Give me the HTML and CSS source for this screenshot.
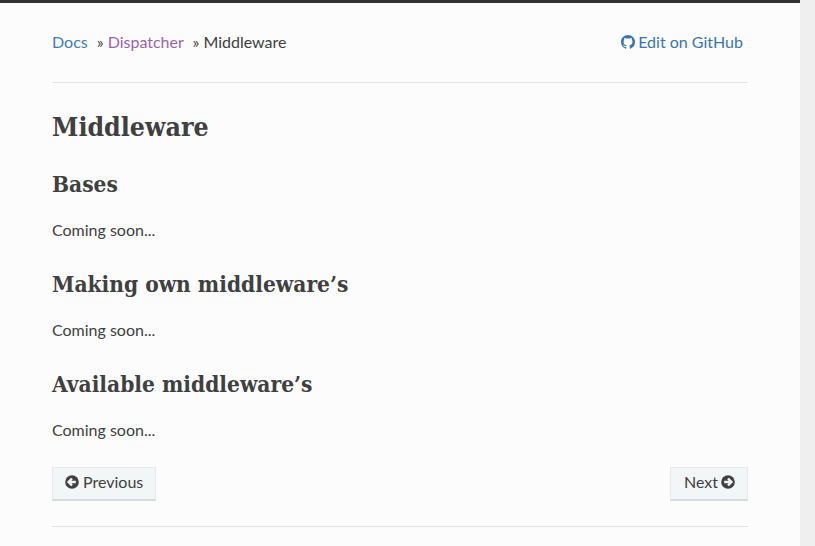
FILE: index.html
```html
<!DOCTYPE html>
<html lang="en">
<head>
    <meta charset="UTF-8">
    <title>Middleware</title>
    <link rel="stylesheet" href="styles.css">
</head>
<body>

<div class="page">
    <div class="content">
        <div class="breadcrumbs">
            <ul>
                <li><a href="#">Docs</a> <span class="sep">»</span></li>
                <li><a href="#" class="visited">Dispatcher</a> <span class="sep">»</span></li>
                <li>Middleware</li>
            </ul>
            <a href="#" class="edit">
                <svg class="icon" viewBox="0 0 16 16"><path fill="currentColor" d="M8 0C3.58 0 0 3.58 0 8c0 3.54 2.29 6.53 5.47 7.59.4.07.55-.17.55-.38 0-.19-.01-.82-.01-1.49-2.01.37-2.53-.49-2.69-.94-.09-.23-.48-.94-.82-1.13-.28-.15-.68-.52-.01-.53.63-.01 1.08.58 1.23.82.72 1.21 1.87.87 2.33.66.07-.52.28-.87.51-1.07-1.78-.2-3.64-.89-3.64-3.95 0-.87.31-1.59.82-2.15-.08-.2-.36-1.02.08-2.12 0 0 .67-.21 2.2.82.64-.18 1.32-.27 2-.27.68 0 1.36.09 2 .27 1.53-1.04 2.2-.82 2.2-.82.44 1.1.16 1.92.08 2.12.51.56.82 1.27.82 2.15 0 3.07-1.87 3.75-3.65 3.95.29.25.54.73.54 1.48 0 1.07-.01 1.93-.01 2.2 0 .21.15.46.55.38A8.013 8.013 0 0016 8c0-4.42-3.58-8-8-8z"/></svg>
                Edit on GitHub
            </a>
        </div>
        <hr>

        <h1>Middleware</h1>
        <h2>Bases</h2>
        <p>Coming soon...</p>
        <h2>Making own middleware’s</h2>
        <p>Coming soon...</p>
        <h2>Available middleware’s</h2>
        <p>Coming soon...</p>

        <div class="pager">
            <a href="#" class="btn">
                <svg class="icon" viewBox="0 0 16 16"><circle cx="8" cy="8" r="7.8" fill="currentColor"/><path d="M12.4 8H5M8 4 4 8l4 4" fill="none" stroke="#f3f6f6" stroke-width="2.8"/></svg>
                Previous
            </a>
            <a href="#" class="btn btn-next">
                Next
                <svg class="icon" viewBox="0 0 16 16"><circle cx="8" cy="8" r="7.8" fill="currentColor"/><path d="M3.6 8H11M8 4l4 4-4 4" fill="none" stroke="#f3f6f6" stroke-width="2.8"/></svg>
            </a>
        </div>
        <hr>
    </div>
</div>

</body>
</html>
```

FILE: styles.css
```css
html, body {
    margin: 0;
    padding: 0;
    height: 100%;
    overflow: hidden;
}
body {
    font-family: 'Lato', sans-serif;
    font-size: 16px;
    line-height: 24px;
    color: #404040;
    background-color: #efefef;
}
a {
    color: #3a80b5;
    text-decoration: none;
}
.page {
    width: 800px;
    height: 100%;
    box-sizing: border-box;
    background-color: #fcfcfc;
    border-top: 3px solid #343131;
}
.content {
    padding: 27px 52px 0 52px;
}
.breadcrumbs {
    display: flex;
    justify-content: space-between;
    padding-right: 5px;
}
.breadcrumbs ul {
    display: flex;
    gap: 4px;
    margin: 0;
    padding: 0;
    list-style: none;
}
.breadcrumbs .visited {
    color: #9b62ab;
}
.sep {
    margin-left: 5px;
}
.edit {
    display: flex;
    align-items: center;
    gap: 3px;
    color: #3a75ad;
}
.icon {
    width: 14px;
    height: 14px;
    flex: none;
}
hr {
    height: 1px;
    margin: 0;
    border: 0;
    background-color: #e1e4e5;
}
.breadcrumbs + hr {
    margin-top: 28px;
}
h1, h2 {
    font-family: 'DejaVu Serif', serif;
    font-stretch: condensed;
    font-weight: 700;
    margin: 0;
}
h1 {
    font-size: 26.5px;
    line-height: 34px;
    margin-top: 27px;
}
h2 {
    font-size: 22.5px;
    line-height: 30px;
    margin-top: 21px;
}
h1 + h2 {
    margin-top: 25px;
}
p {
    margin: 0;
    padding-top: 19px;
    height: 24px;
}
p + h2 {
    margin-top: 27px;
}
.pager {
    display: flex;
    justify-content: space-between;
    margin-top: 25px;
}
.btn {
    display: flex;
    align-items: center;
    gap: 4px;
    box-sizing: border-box;
    height: 34px;
    padding: 0 12px 3px;
    color: #404040;
    background-color: #f3f6f6;
    border: 1px solid #e6e9ea;
    border-bottom: 2px solid #d9dcdd;
}
.btn-next {
    gap: 3px;
    padding-left: 13px;
}
.pager + hr {
    margin-top: 25px;
}
```
